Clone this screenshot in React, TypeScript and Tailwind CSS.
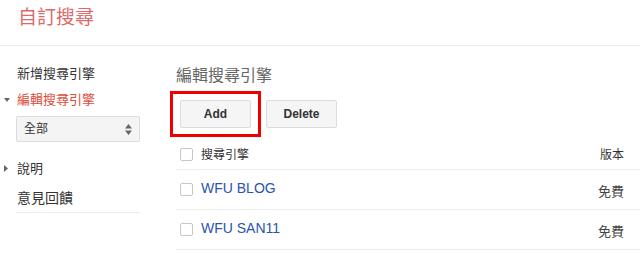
import * as React from "react"

const cjk = "font-['Arial','Liberation_Sans','Noto_Sans_CJK_TC',sans-serif]"

const Checkbox = () => <span className="block h-[13px] w-[13px] rounded-[2px] border border-[#c6c6c6] bg-white" />

const Row = ({ name, plan }: { name: string; plan: string }) => (
  <div className="flex h-[40px] items-center border-b border-[#ebebeb] pl-[4px] pr-[16px]">
    <Checkbox />
    <span className="mb-[3px] ml-[8px] flex-1 text-[14px] text-[#2a53b3]">{name}</span>
    <span className="pt-[5px] text-[13px] text-[#444]">{plan}</span>
  </div>
)

export default function App() {
  return (
    <div className={`h-[254px] w-[640px] overflow-hidden bg-white ${cjk}`}>
      {/* header */}
      <div className="h-[46px] border-b border-[#ebebeb] pl-[18px] pt-[6px]">
        <h1 className="text-[19px] leading-[24px] text-[#dc6a6a]">自訂搜尋</h1>
      </div>

      <div className="flex">
        {/* sidebar */}
        <div className="w-[160px] pl-[16px] pt-[18px] text-[13px] text-[#333]">
          <div className="pl-[1px] leading-[20px]">新增搜尋引擎</div>
          <div className="relative mt-[6px] pl-[1px] leading-[20px] text-[#dd4b39]">
            <svg className="absolute left-[-12px] top-[8px]" width="6" height="4" viewBox="0 0 6 4">
              <path d="M0 0h6L3 4z" fill="#666" />
            </svg>
            編輯搜尋引擎
          </div>
          <div className="mt-[6px] flex h-[26px] w-[124px] items-center justify-between rounded-[2px] border border-[#dcdcdc] bg-[#f4f4f4] pl-[7px] pr-[7px] text-[12px] text-[#333]">
            全部
            <svg width="7" height="11" viewBox="0 0 7 11">
              <path d="M0 4.5h7L3.5 0zM0 6.5h7L3.5 11z" fill="#666" />
            </svg>
          </div>
          <div className="relative mt-[17px] pl-[1px] leading-[20px]">
            <svg className="absolute left-[-12px] top-[6px]" width="4" height="7" viewBox="0 0 4 7">
              <path d="M0 0v7l4-3.5z" fill="#666" />
            </svg>
            說明
          </div>
          <div className="mt-[9px] w-[124px] border-b border-[#ebebeb] pb-[4px] pl-[1px] text-[14px] leading-[20px]">意見回饋</div>
        </div>

        {/* main */}
        <div className="flex-1 pl-[16px] pt-[20px]">
          <h2 className="text-[16px] leading-[20px] text-[#666]">編輯搜尋引擎</h2>
          <div className="mt-[14px] flex gap-[15px] pl-[4px]">
            <div className="relative">
              <button className="h-[28px] w-[71px] rounded-[2px] border border-[#dcdcdc] bg-[#f5f5f5] text-[12px] font-bold text-[#333]">
                Add
              </button>
              <span className="pointer-events-none absolute inset-x-[-10px] inset-y-[-9px] border-[3px] border-[#ee0000]" />
            </div>
            <button className="h-[28px] w-[71px] rounded-[2px] border border-[#dcdcdc] bg-[#f5f5f5] text-[12px] font-bold text-[#333]">
              Delete
            </button>
          </div>
          <div className="mt-[12px]">
            <div className="flex h-[30px] items-center border-b border-[#ebebeb] pl-[4px] pr-[16px] text-[12px] text-[#333]">
              <Checkbox />
              <span className="ml-[8px] flex-1">搜尋引擎</span>
              <span>版本</span>
            </div>
            <Row name="WFU BLOG" plan="免費" />
            <Row name="WFU SAN11" plan="免費" />
          </div>
        </div>
      </div>
    </div>
  )
}
